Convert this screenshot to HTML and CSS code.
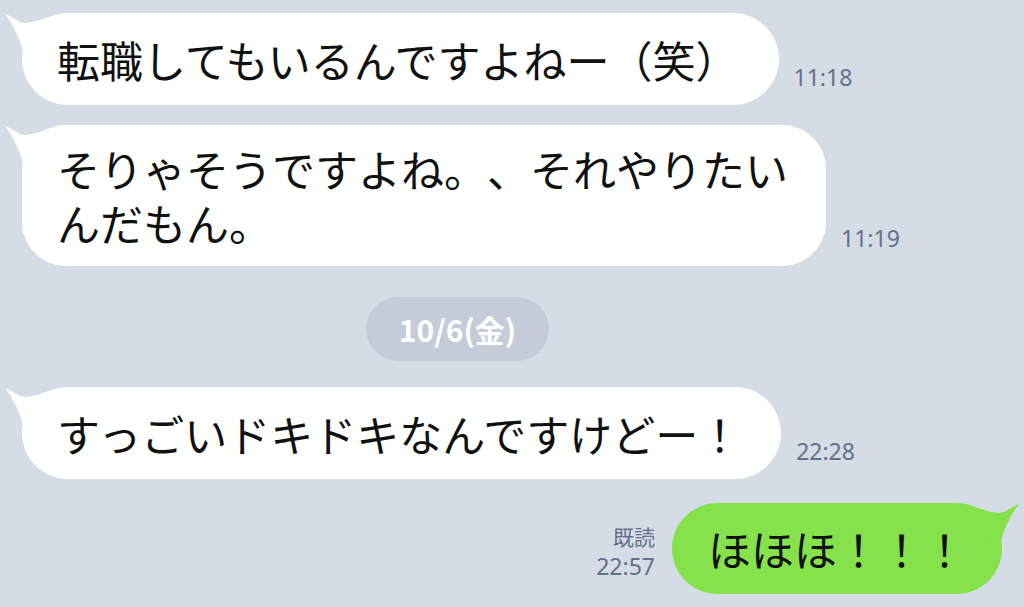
FILE: index.html
```html
<!DOCTYPE html>
<html lang="ja">
<head>
    <meta charset="UTF-8">
    <meta name="viewport" content="width=device-width, initial-scale=1.0">
    <title>トーク</title>
    <link rel="stylesheet" href="styles.css">
</head>
<body>
    <div class="talk">
        <!-- received -->
        <div class="row row-first">
            <div class="bubble">
                <svg class="tail" width="52" height="42" viewBox="0 0 52 42"><path d="M3 1C10 3 16 10 23 10C31 10 40 6 50 3L50 30L21 38C18 26 11 11 3 1Z"/></svg>
                転職してもいるんですよねー（笑）
            </div>
            <div class="meta">11:18</div>
        </div>

        <div class="row row-second">
            <div class="bubble bubble-multi">
                <svg class="tail" width="52" height="42" viewBox="0 0 52 42"><path d="M3 1C10 3 16 10 23 10C31 10 40 6 50 3L50 30L21 38C18 26 11 11 3 1Z"/></svg>
                そりゃそうですよね。、それやりたい<br>んだもん。
            </div>
            <div class="meta">11:19</div>
        </div>

        <!-- date separator -->
        <div class="date">10/6(金)</div>

        <div class="row row-third">
            <div class="bubble">
                <svg class="tail" width="52" height="42" viewBox="0 0 52 42"><path d="M3 1C10 3 16 10 23 10C31 10 40 6 50 3L50 30L21 38C18 26 11 11 3 1Z"/></svg>
                すっごいドキドキなんですけどー！
            </div>
            <div class="meta">22:28</div>
        </div>

        <!-- sent -->
        <div class="row row-sent">
            <div class="meta meta-sent">
                <div>既読</div>
                <div>22:57</div>
            </div>
            <div class="bubble bubble-sent">
                <svg class="tail tail-sent" width="52" height="42" viewBox="0 0 52 42"><path d="M3 1C10 3 16 10 23 10C31 10 40 6 50 3L50 30L21 38C18 26 11 11 3 1Z"/></svg>
                ほほほ！！！
            </div>
        </div>
    </div>
</body>
</html>
```

FILE: styles.css
```css
body {
    margin: 0;
    background-color: #d6dce6;
    font-family: "Noto Sans CJK JP", "Noto Sans", sans-serif;
    overflow: hidden;
}

.talk {
    padding-top: 13px;
    height: 594px;
}

.row {
    display: flex;
    align-items: flex-end;
    padding-left: 22px;
}

.row-first {
    margin-bottom: 20px;
}

.row-second {
    margin-bottom: 31px;
}

.row-third {
    margin-bottom: 24px;
}

.row-sent {
    justify-content: flex-end;
    padding-left: 0;
    padding-right: 22px;
}

/* Speech bubble */
.bubble {
    position: relative;
    background-color: #fff;
    color: #111;
    font-size: 43px;
    line-height: 54px;
    padding: 19px 40px 19px 35px;
    border-radius: 46px;
    white-space: nowrap;
    text-spacing-trim: space-all;
}

.bubble-multi {
    padding-top: 16px;
    padding-bottom: 17px;
    padding-right: 38px;
    border-radius: 44px;
}

.bubble-sent {
    background-color: #86e24b;
    padding: 18px 36px 19px 36px;
}

.tail {
    position: absolute;
    left: -20px;
    top: 0;
    fill: #fff;
}

.tail-sent {
    left: auto;
    right: -20px;
    transform: scaleX(-1);
    fill: #86e24b;
}

/* Time and read marks */
.meta {
    font-family: "Noto Sans", sans-serif;
    font-size: 23px;
    line-height: 28px;
    color: #63718a;
    margin: 0 0 14px 15px;
}

.meta-sent {
    text-align: right;
    margin: 0 17px 13px 0;
    line-height: 30px;
}

.meta-sent div:first-child {
    font-family: "Noto Sans CJK JP", sans-serif;
    font-size: 21px;
}

/* Date separator */
.date {
    width: 183px;
    height: 64px;
    margin: 0 0 26px 366px;
    border-radius: 32px;
    background-color: #c5ccd8;
    color: #fff;
    font-size: 30px;
    font-weight: 600;
    line-height: 64px;
    text-align: center;
}
```
